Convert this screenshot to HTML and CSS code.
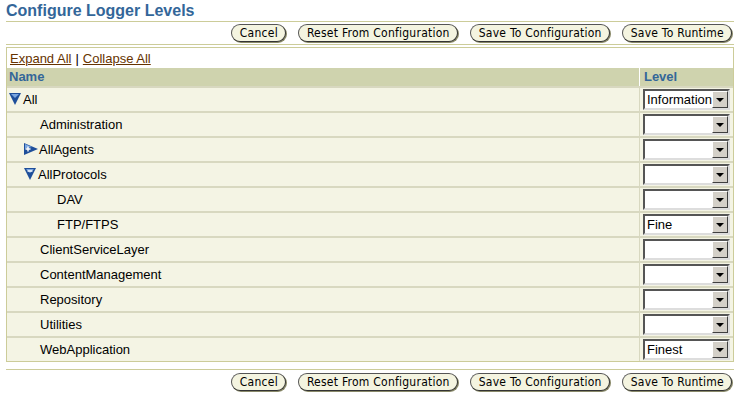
FILE: index.html
```html
<!DOCTYPE html>
<html lang="en">
<head>
    <meta charset="UTF-8">
    <title>Configure Logger Levels</title>
    <link rel="stylesheet" href="styles.css">
</head>
<body>
    <!-- Заголовок -->
    <h1 class="title">Configure Logger Levels</h1>

    <div class="actions">
        <button class="btn">Cancel</button>
        <button class="btn">Reset From Configuration</button>
        <button class="btn">Save To Configuration</button>
        <button class="btn">Save To Runtime</button>
    </div>

    <!-- Таблица логгеров -->
    <div class="box">
        <div class="toolbar">
            <a href="#">Expand All</a><span class="sep">|</span><a href="#">Collapse All</a>
        </div>
        <table class="grid">
            <thead>
                <tr>
                    <th class="col-name">Name</th>
                    <th class="col-level">Level</th>
                </tr>
            </thead>
            <tbody>
                <tr>
                    <td class="lvl0"><svg class="tw" viewBox="0 0 12 14"><path d="M0 1 L12 1 L6 13 Z" fill="#1f4f9a"/><path d="M2 2 L10 2 L6 6 Z" fill="#7aa6e0"/></svg>All</td>
                    <td class="cell-sel"><div class="select"><span class="val">Information</span><span class="arr"></span></div></td>
                </tr>
                <tr>
                    <td class="lvl1 noicon">Administration</td>
                    <td class="cell-sel"><div class="select"><span class="val"></span><span class="arr"></span></div></td>
                </tr>
                <tr>
                    <td class="lvl1"><svg class="tw tw-right" viewBox="0 0 14 12"><path d="M0 0 L14 6 L0 12 Z" fill="#1f4f9a"/><path d="M1 1 L8 4 L1 5.5 Z" fill="#7aa6e0"/><path d="M1.5 6 H6.5 M4 3.5 V8.5" stroke="#fff" stroke-width="1.4"/></svg>AllAgents</td>
                    <td class="cell-sel"><div class="select"><span class="val"></span><span class="arr"></span></div></td>
                </tr>
                <tr>
                    <td class="lvl1"><svg class="tw" viewBox="0 0 12 14"><path d="M0 1 L12 1 L6 13 Z" fill="#1f4f9a"/><path d="M2 2 L10 2 L6 6 Z" fill="#7aa6e0"/><path d="M3.5 4 H8.5" stroke="#fff" stroke-width="1.4"/></svg>AllProtocols</td>
                    <td class="cell-sel"><div class="select"><span class="val"></span><span class="arr"></span></div></td>
                </tr>
                <tr>
                    <td class="lvl2">DAV</td>
                    <td class="cell-sel"><div class="select"><span class="val"></span><span class="arr"></span></div></td>
                </tr>
                <tr>
                    <td class="lvl2">FTP/FTPS</td>
                    <td class="cell-sel"><div class="select"><span class="val">Fine</span><span class="arr"></span></div></td>
                </tr>
                <tr>
                    <td class="lvl1 noicon">ClientServiceLayer</td>
                    <td class="cell-sel"><div class="select"><span class="val"></span><span class="arr"></span></div></td>
                </tr>
                <tr>
                    <td class="lvl1 noicon">ContentManagement</td>
                    <td class="cell-sel"><div class="select"><span class="val"></span><span class="arr"></span></div></td>
                </tr>
                <tr>
                    <td class="lvl1 noicon">Repository</td>
                    <td class="cell-sel"><div class="select"><span class="val"></span><span class="arr"></span></div></td>
                </tr>
                <tr>
                    <td class="lvl1 noicon">Utilities</td>
                    <td class="cell-sel"><div class="select"><span class="val"></span><span class="arr"></span></div></td>
                </tr>
                <tr>
                    <td class="lvl1 noicon">WebApplication</td>
                    <td class="cell-sel"><div class="select"><span class="val">Finest</span><span class="arr"></span></div></td>
                </tr>
            </tbody>
        </table>
    </div>

    <div class="actions bottom">
        <button class="btn">Cancel</button>
        <button class="btn">Reset From Configuration</button>
        <button class="btn">Save To Configuration</button>
        <button class="btn">Save To Runtime</button>
    </div>
</body>
</html>
```

FILE: styles.css
```css
body {
    margin: 0;
    padding: 0 5px 0 6px;
    background-color: #ffffff;
    font-family: "Liberation Sans", Arial, sans-serif;
    font-size: 12px;
    color: #000;
}
.title {
    margin: 0;
    padding: 2px 0 1px 0;
    font-size: 16px;
    font-weight: bold;
    color: #336699;
    line-height: 18px;
    border-bottom: 1px solid #cccc99;
}
/* Кнопки */
.actions {
    display: flex;
    justify-content: flex-end;
    gap: 12px;
    padding: 2px 2px 2px 0;
    border-bottom: 1px solid #cccc99;
}
.actions.bottom {
    border-bottom: none;
    border-top: 1px solid #cccc99;
    margin-top: 7px;
    padding-top: 3px;
}
.btn {
    font-family: "DejaVu Sans Condensed", "DejaVu Sans", sans-serif;
    font-size: 12px;
    letter-spacing: 0.25px;
    line-height: 14px;
    height: 18px;
    padding: 0 7px 0 8px;
    color: #000;
    background-color: #f4f4e0;
    border: 1px solid #555;
    border-right-color: #333;
    border-bottom-color: #333;
    border-radius: 9px;
    box-shadow: 1px 1px 0 #8a8a6a;
    cursor: pointer;
}
.box {
    margin-top: 2px;
    border: 1px solid #cccc99;
}
.toolbar {
    padding: 3px 3px 1px 3px;
    font-size: 13px;
    line-height: 16px;
}
.toolbar a {
    color: #663300;
}
.sep {
    margin: 0 4px;
}
.grid {
    width: 100%;
    border-collapse: collapse;
}
.grid th {
    background-color: #cfd3ae;
    color: #336699;
    font-size: 13px;
    font-weight: bold;
    text-align: left;
    padding: 0 2px;
    height: 18px;
    line-height: 18px;
}
.grid th.col-level {
    width: 86px;
    border-left: 1px solid #fff;
    padding-left: 4px;
}
.grid td {
    background-color: #f4f4e4;
    border-top: 2px solid #d8d8c0;
    height: 23px;
    padding: 0;
    font-size: 13px;
    white-space: nowrap;
}
.grid td.cell-sel {
    width: 86px;
    border-left: 1px solid #d8d8c0;
    padding: 0 3px 0 3px;
}
.lvl0 {
    padding-left: 2px !important;
}
.lvl1 {
    padding-left: 17px !important;
}
.lvl1.noicon {
    padding-left: 33px !important;
}
.lvl2 {
    padding-left: 50px !important;
}
.tw {
    width: 12px;
    height: 14px;
    vertical-align: -2px;
    margin-right: 2px;
}
.tw.tw-right {
    width: 14px;
    height: 12px;
    vertical-align: -1px;
    margin-right: 1px;
}
/* Выпадающий список */
.select {
    display: flex;
    box-sizing: border-box;
    width: 100%;
    height: 21px;
    border: 2px solid;
    border-color: #555 #ddd #ddd #555;
    background-color: #fff;
}
.val {
    flex: 1;
    padding-left: 2px;
    line-height: 17px;
    font-size: 13px;
}
.arr {
    width: 16px;
    background-color: #d4d0c8;
    border: 1px solid;
    border-color: #fff #404040 #404040 #fff;
    box-sizing: border-box;
    position: relative;
}
.arr::after {
    content: "";
    position: absolute;
    left: 3px;
    top: 6px;
    border-left: 4px solid transparent;
    border-right: 4px solid transparent;
    border-top: 4px solid #000;
}
```
